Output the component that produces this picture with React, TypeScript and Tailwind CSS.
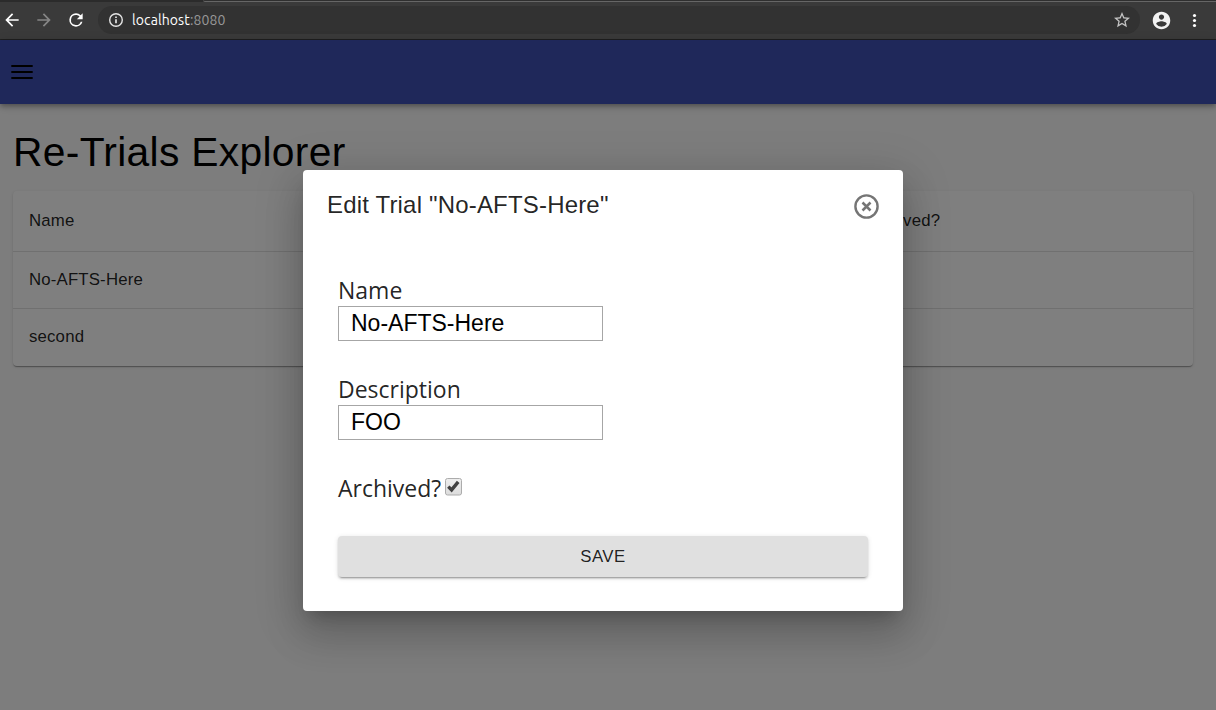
import React from "react";

function BrowserBar() {
  return (
    <header className="flex h-10 shrink-0 flex-col border-b border-[#202020] bg-[#3a3a3a]">
      <div className="flex h-0.5 shrink-0 bg-[#2b2b2b]">
        <div className="w-[203px]" />
        <div className="flex-1 rounded-bl border-b border-[#666666] bg-[#2f2f2f]" />
      </div>
      <div className="flex h-9 items-center">
        <svg className="ml-[2px] size-5 shrink-0 text-white" viewBox="0 0 24 24" fill="currentColor">
          <path d="M20 11H7.83l5.59-5.59L12 4l-8 8 8 8 1.41-1.41L7.83 13H20v-2z" />
        </svg>
        <svg className="ml-3 size-5 shrink-0 text-[#868686]" viewBox="0 0 24 24" fill="currentColor">
          <path d="m12 4-1.41 1.41L16.17 11H4v2h12.17l-5.58 5.59L12 20l8-8z" />
        </svg>
        <svg className="ml-3 size-5 shrink-0 text-white" viewBox="0 0 24 24" fill="currentColor">
          <path d="M17.65 6.35A7.96 7.96 0 0 0 12 4a8 8 0 1 0 7.73 10h-2.08A6 6 0 1 1 12 6c1.66 0 3.14.69 4.22 1.78L13 11h7V4l-2.35 2.35z" />
        </svg>
        <div className="ml-3 flex h-7 flex-1 items-center rounded-full bg-[#323232] px-[10px]">
          <svg className="size-4 shrink-0 text-[#e4e4e4]" viewBox="0 0 16 16" fill="none" stroke="currentColor">
            <circle cx="8" cy="8" r="6.3" strokeWidth="1.4" />
            <path d="M8 7.2v4M8 4.4v1.6" strokeWidth="1.7" />
          </svg>
          <div className="ml-2 flex-1 font-[Ubuntu,'Noto_Sans',sans-serif] text-[14px] leading-5 tracking-[0.1px] text-white">
            localhost<span className="text-[#989898]">:8080</span>
          </div>
          <svg className="size-4 shrink-0 text-[#c4c4c4]" viewBox="2 2 20 20" fill="currentColor">
            <path d="m22 9.24-7.19-.62L12 2 9.19 8.63 2 9.24l5.46 4.73L5.82 21 12 17.27 18.18 21l-1.63-7.03L22 9.24zM12 15.4l-3.76 2.27 1-4.28-3.32-2.88 4.38-.38L12 6.1l1.71 4.04 4.38.38-3.32 2.88 1 4.28L12 15.4z" />
          </svg>
        </div>
        <svg className="ml-[11px] size-[21px] shrink-0 text-[#f2f2f2]" viewBox="0 0 24 24" fill="currentColor">
          <path d="M12 2C6.48 2 2 6.48 2 12s4.48 10 10 10 10-4.48 10-10S17.52 2 12 2zm0 3c1.66 0 3 1.34 3 3s-1.34 3-3 3-3-1.34-3-3 1.34-3 3-3zm0 14.2a7.2 7.2 0 0 1-6-3.22c.03-1.99 4-3.08 6-3.08 1.99 0 5.97 1.09 6 3.08a7.2 7.2 0 0 1-6 3.22z" />
        </svg>
        <svg className="mr-3 ml-3 size-5 shrink-0 text-white" viewBox="0 0 20 20" fill="currentColor">
          <circle cx="10.5" cy="5.5" r="1.6" />
          <circle cx="10.5" cy="10.5" r="1.6" />
          <circle cx="10.5" cy="15.5" r="1.6" />
        </svg>
      </div>
    </header>
  );
}

function Field({ label, value }: { label: string; value: string }) {
  return (
    <label className="flex flex-col">
      <span className="h-[33px] pt-px font-['Open_Sans',sans-serif] text-[23px] leading-[33px]">{label}</span>
      <input
        className="h-[35px] w-[265px] border border-[#a6a6a6] bg-white px-3 font-['Liberation_Sans',Arial,sans-serif] text-[23px] text-black outline-none"
        defaultValue={value}
      />
    </label>
  );
}

function EditDialog() {
  return (
    <div className="mt-[130px] ml-[303px] flex h-[441px] w-[600px] flex-col rounded bg-white text-black/87 shadow-[0px_11px_15px_-7px_rgba(0,0,0,0.2),0px_24px_38px_3px_rgba(0,0,0,0.14),0px_9px_46px_8px_rgba(0,0,0,0.12)]">
      <div className="flex h-[103px] justify-between px-6">
        <h2 className="pt-4 text-[24px] leading-[38px] tracking-[0.18px]">Edit Trial "No-AFTS-Here"</h2>
        <svg className="mt-6 size-[25px] text-[#757575]" viewBox="0 0 25 25" fill="none" stroke="currentColor">
          <circle cx="12.5" cy="12.5" r="11.1" strokeWidth="2.4" />
          <path d="m8.5 8.5 8 8m0-8-8 8" strokeWidth="2.5" />
        </svg>
      </div>
      <div className="mx-[35px] flex flex-col">
        <div className="flex flex-col gap-[31px]">
          <Field label="Name" value="No-AFTS-Here" />
          <Field label="Description" value="FOO" />
        </div>
        <div className="mt-8 flex h-[33px] items-center">
          <span className="font-['Open_Sans',sans-serif] text-[23px] leading-[33px]">Archived?</span>
          <svg className="mb-[3px] ml-1 size-[18px]" viewBox="0 0 18 18">
            <defs>
              <linearGradient id="box" x1="0" y1="0" x2="0" y2="1">
                <stop offset="0" stopColor="#eeeeee" />
                <stop offset="1" stopColor="#dcdcdc" />
              </linearGradient>
            </defs>
            <rect x="0.5" y="0.5" width="16" height="16.5" rx="2" fill="url(#box)" stroke="#acacac" />
            <path d="m3.3 8.6 3.3 3.3 6.6-8" fill="none" stroke="#404040" strokeWidth="3.4" />
          </svg>
        </div>
        <button className="mt-[31px] h-[41px] rounded bg-[#e0e0e0] text-[16.8px] leading-6 tracking-[0.48px] shadow-[0px_3px_1px_-2px_rgba(0,0,0,0.2),0px_2px_2px_0px_rgba(0,0,0,0.14),0px_1px_5px_0px_rgba(0,0,0,0.12)]">
          SAVE
        </button>
      </div>
    </div>
  );
}

export default function App() {
  return (
    <div className="flex h-[710px] w-[1216px] flex-col overflow-hidden font-['Liberation_Sans',Arial,sans-serif]">
      <BrowserBar />
      <div className="relative flex flex-1 flex-col bg-[#fafafa]">
        <nav className="flex h-16 items-center bg-[#3f51b5] pl-[9px] shadow-[0px_2px_4px_-1px_rgba(0,0,0,0.2),0px_4px_5px_0px_rgba(0,0,0,0.14),0px_1px_10px_0px_rgba(0,0,0,0.12)]">
          <svg className="size-[26px] text-black" viewBox="0 0 26 26" fill="currentColor">
            <path d="M2.3 5.9h21.4v2.2H2.3zM2.3 11.9h21.4v2.2H2.3zM2.3 17.9h21.4v2.2H2.3z" />
          </svg>
        </nav>
        <main className="px-[13px] pt-6">
          <h1 className="h-[63px] text-[40.8px] leading-[48px] tracking-[0.3px] text-black">Re-Trials Explorer</h1>
          <div className="flex w-[1180px] flex-col rounded bg-white text-[16.8px] tracking-[0.17px] text-black/87 shadow-[0px_2px_1px_-1px_rgba(0,0,0,0.2),0px_1px_1px_0px_rgba(0,0,0,0.14),0px_1px_3px_0px_rgba(0,0,0,0.12)]">
            <div className="flex h-[61px] items-center border-b border-[#e0e0e0] pl-4">
              <span className="w-[835px]">Name</span>
              <span>Archived?</span>
            </div>
            <div className="flex h-[57px] items-center border-b border-[#e0e0e0] pl-4">No-AFTS-Here</div>
            <div className="flex h-[57px] items-center pb-px pl-4">second</div>
          </div>
        </main>
        <div className="absolute inset-0 flex items-start bg-black/50">
          <EditDialog />
        </div>
      </div>
    </div>
  );
}
